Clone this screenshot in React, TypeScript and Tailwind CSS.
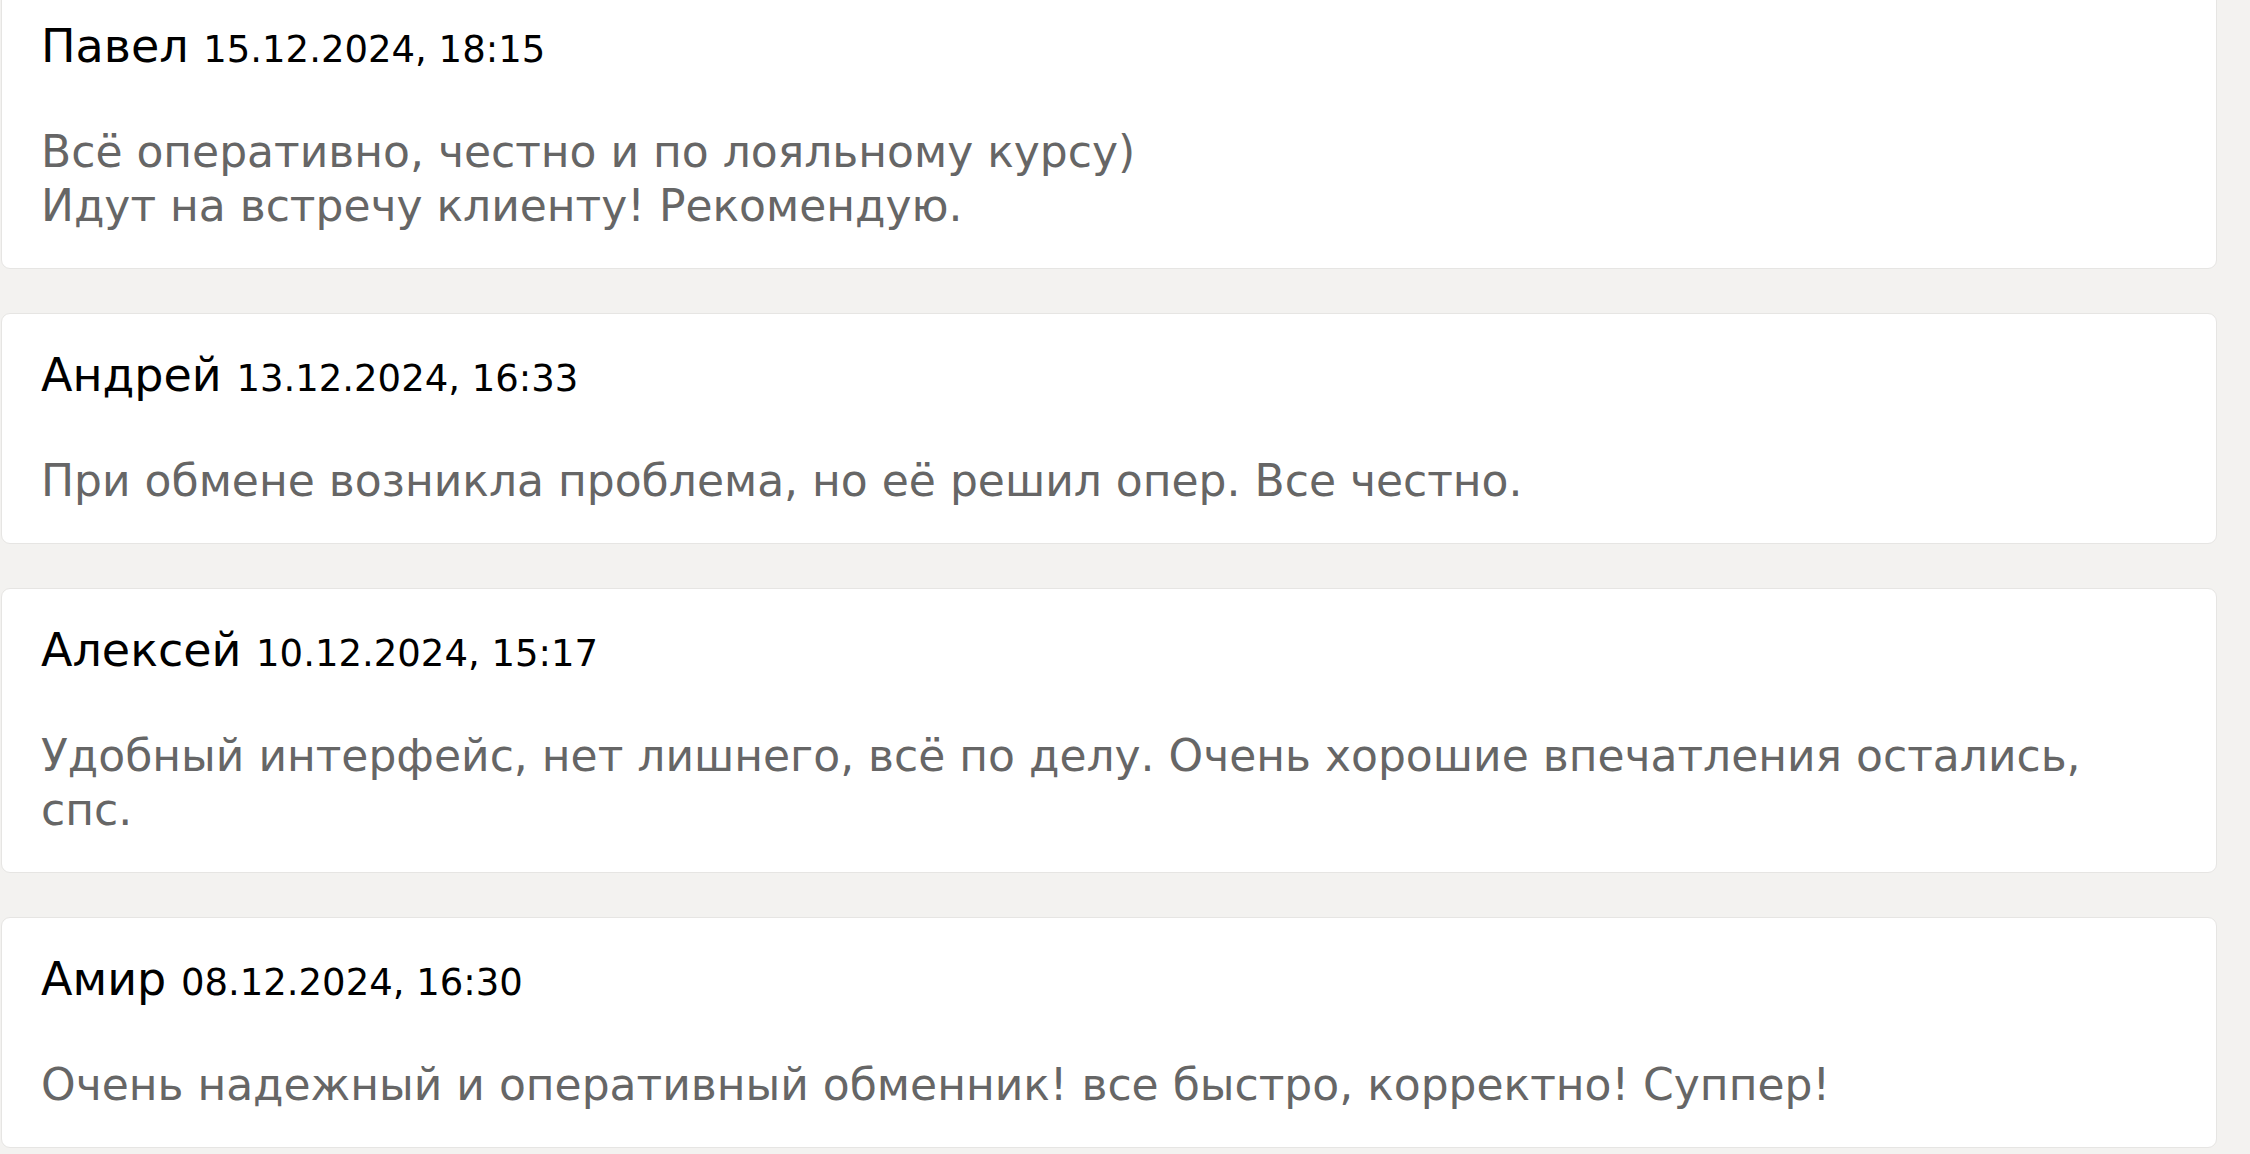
const reviews = [
  {
    name: "Павел",
    date: "15.12.2024, 18:15",
    text: ["Всё оперативно, честно и по лояльному курсу)", "Идут на встречу клиенту! Рекомендую."],
  },
  {
    name: "Андрей",
    date: "13.12.2024, 16:33",
    text: ["При обмене возникла проблема, но её решил опер. Все честно."],
  },
  {
    name: "Алексей",
    date: "10.12.2024, 15:17",
    text: ["Удобный интерфейс, нет лишнего, всё по делу. Очень хорошие впечатления остались, спс."],
  },
  {
    name: "Амир",
    date: "08.12.2024, 16:30",
    text: ["Очень надежный и оперативный обменник! все быстро, корректно! Суппер!"],
  },
];

export default function App() {
  return (
    <div className="min-h-screen w-full overflow-hidden bg-[#f3f2f0] font-['DejaVu_Sans',Verdana,sans-serif]">
      <div className="-mt-[16px] flex w-[2217px] flex-col gap-[44px] pl-px">
        {reviews.map((r) => (
          <div
            key={r.name}
            className="rounded-[9px] border border-[#e6e5e3] bg-white pl-[39px] pr-[60px] pt-[31px] pb-[35px]"
          >
            <div className="text-[46px] leading-[60px] text-black">
              <span>{r.name}</span>{" "}
              <span className="text-[37px] leading-[37px]">{r.date}</span>
            </div>
            <div className="mt-[49px] text-[44px] leading-[54px] text-[#666666]">
              {r.text.map((line, i) => (
                <p key={i}>{line}</p>
              ))}
            </div>
          </div>
        ))}
      </div>
    </div>
  );
}
